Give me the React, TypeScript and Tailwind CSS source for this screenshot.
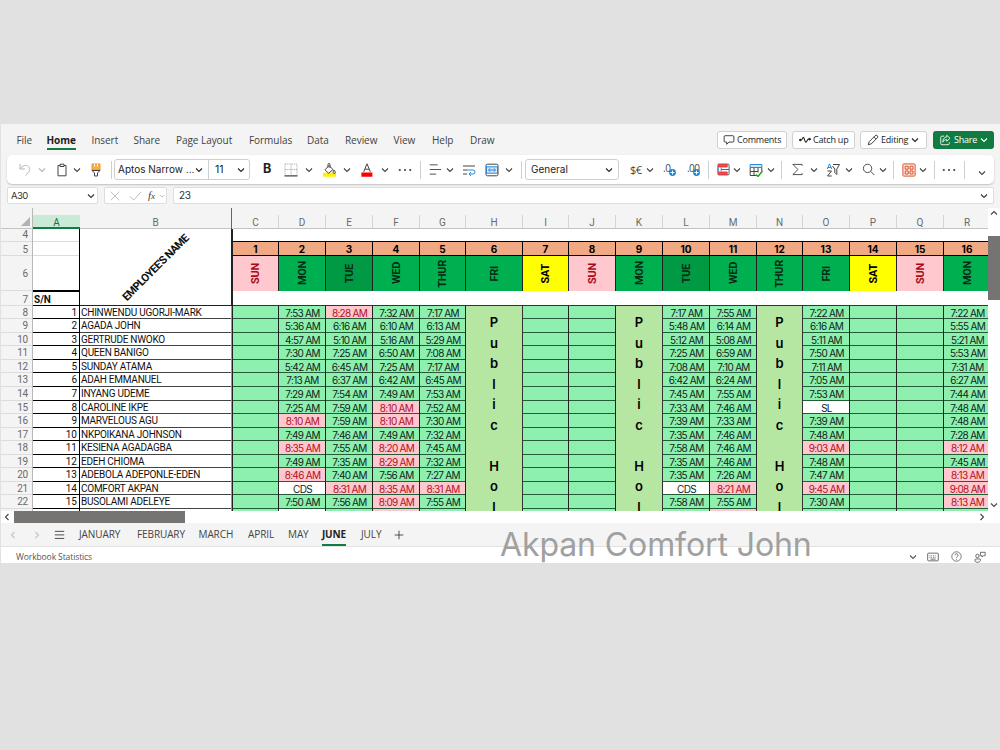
import type { ReactNode } from 'react';
import clsx from 'clsx';

const MENU = [
  { label: 'File', width: 'w-[30px]' },
  { label: 'Home', width: 'w-[45px]', active: true },
  { label: 'Insert', width: 'w-[42px]' },
  { label: 'Share', width: 'w-[42.5px]' },
  { label: 'Page Layout', width: 'w-[73px]' },
  { label: 'Formulas', width: 'w-[58px]' },
  { label: 'Data', width: 'w-[38px]' },
  { label: 'Review', width: 'w-[48.5px]' },
  { label: 'View', width: 'w-[38.5px]' },
  { label: 'Help', width: 'w-[38px]' },
  { label: 'Draw', width: 'w-[30px]' },
];

// Rows alternate between 13px and 14px, border included
const ROW_H = [
  'h-[13px]', 'h-[14px]', 'h-[13px]', 'h-[14px]', 'h-[13px]',
  'h-[14px]', 'h-[14px]', 'h-[13px]', 'h-[14px]', 'h-[13px]',
  'h-[14px]', 'h-[13px]', 'h-[14px]', 'h-[13px]', 'h-[14px]',
];

const EMPLOYEES = [
  'CHINWENDU UGORJI-MARK',
  'AGADA JOHN',
  'GERTRUDE NWOKO',
  'QUEEN BANIGO',
  'SUNDAY ATAMA',
  'ADAH EMMANUEL',
  'INYANG UDEME',
  'CAROLINE IKPE',
  'MARVELOUS AGU',
  'NKPOIKANA JOHNSON',
  'KESIENA AGADAGBA',
  'EDEH CHIOMA',
  'ADEBOLA ADEPONLE-EDEN',
  'COMFORT AKPAN',
  'BUSOLAMI ADELEYE',
];

interface DayColumn {
  letter: string;
  date: number;
  day: string;
  width: string;
  times?: string;
  holiday?: boolean;
  tail?: string;
}

const COLUMNS: DayColumn[] = [
  { letter: 'C', date: 1, day: 'SUN', width: 'w-[46px]' },
  {
    letter: 'D', date: 2, day: 'MON', width: 'w-[47px]', tail: 'bg-white',
    times: '7:53 5:36 4:57 7:30 5:42 7:13 7:29 7:25 8:10 7:49 8:35 7:49 8:46 CDS 7:50',
  },
  {
    letter: 'E', date: 3, day: 'TUE', width: 'w-[47px]',
    times: '8:28 6:16 5:10 7:25 6:45 6:37 7:54 7:59 7:59 7:46 7:55 7:35 7:40 8:31 7:56',
  },
  {
    letter: 'F', date: 4, day: 'WED', width: 'w-[47px]', tail: 'bg-[#ffc7ce]',
    times: '7:32 6:10 5:16 6:50 7:25 6:42 7:49 8:10 8:10 7:49 8:20 8:29 7:56 8:35 8:09',
  },
  {
    letter: 'G', date: 5, day: 'THUR', width: 'w-[46px]',
    times: '7:17 6:13 5:29 7:08 7:17 6:45 7:53 7:52 7:30 7:32 7:45 7:32 7:27 8:31 7:55',
  },
  { letter: 'H', date: 6, day: 'FRI', width: 'w-[57px]', holiday: true },
  { letter: 'I', date: 7, day: 'SAT', width: 'w-[46px]' },
  { letter: 'J', date: 8, day: 'SUN', width: 'w-[47px]' },
  { letter: 'K', date: 9, day: 'MON', width: 'w-[47px]', holiday: true },
  {
    letter: 'L', date: 10, day: 'TUE', width: 'w-[47px]',
    times: '7:17 5:48 5:12 7:25 7:08 6:42 7:45 7:33 7:39 7:35 7:58 7:35 7:35 CDS 7:58',
  },
  {
    letter: 'M', date: 11, day: 'WED', width: 'w-[47px]', tail: 'bg-[#ffc7ce]',
    times: '7:55 6:14 5:08 6:59 7:10 6:24 7:55 7:46 7:33 7:46 7:46 7:46 7:26 8:21 7:55',
  },
  { letter: 'N', date: 12, day: 'THUR', width: 'w-[46px]', holiday: true },
  {
    letter: 'O', date: 13, day: 'FRI', width: 'w-[47px]',
    times: '7:22 6:16 5:11 7:50 7:11 7:05 7:53 SL 7:39 7:48 9:03 7:48 7:47 9:45 7:30',
  },
  { letter: 'P', date: 14, day: 'SAT', width: 'w-[47px]' },
  { letter: 'Q', date: 15, day: 'SUN', width: 'w-[47px]' },
  {
    letter: 'R', date: 16, day: 'MON', width: 'w-[47px]',
    times: '7:22 5:55 5:21 5:53 7:31 6:27 7:44 7:48 7:48 7:28 8:12 7:45 8:13 9:08 8:13',
  },
];

const DAY_STYLE: Record<string, string> = {
  SUN: 'bg-[#ffc7ce] text-[#a80c18]',
  SAT: 'bg-[#ffff00] text-black',
  TUE: 'bg-[#009a45] text-[#062b13]',
  MON: 'bg-[#00b050] text-[#062b13]',
  WED: 'bg-[#00b050] text-[#062b13]',
  THUR: 'bg-[#00b050] text-[#062b13]',
  FRI: 'bg-[#00b050] text-[#062b13]',
};

const MONTHS = [
  { label: 'JANUARY', width: 'w-[58px]' },
  { label: 'FEBRUARY', width: 'w-[61.5px]' },
  { label: 'MARCH', width: 'w-[49.5px]' },
  { label: 'APRIL', width: 'w-[40px]' },
  { label: 'MAY', width: 'w-[34px]' },
  { label: 'JUNE', width: 'w-[39px]', active: true },
  { label: 'JULY', width: 'w-[34px]' },
];

function Chevron({ className, dir = 'down' }: { className?: string; dir?: 'down' | 'left' | 'right' | 'up' }) {
  const d = {
    down: 'M1 2.5 4 5.5 7 2.5',
    up: 'M1 5.5 4 2.5 7 5.5',
    left: 'M5.5 1 2.5 4 5.5 7',
    right: 'M2.5 1 5.5 4 2.5 7',
  }[dir];
  return (
    <svg viewBox="0 0 8 8" className={clsx('h-2 w-2 shrink-0', className)} fill="none" stroke="currentColor" strokeWidth="1.1">
      <path d={d} />
    </svg>
  );
}

function Icon({ className, size = 14, children }: { className?: string; size?: number; children: ReactNode }) {
  return (
    <svg
      width={size}
      height={size}
      viewBox="0 0 14 14"
      className={clsx('shrink-0', className)}
      fill="none"
      stroke="currentColor"
      strokeWidth="1"
    >
      {children}
    </svg>
  );
}

function Divider({ className }: { className?: string }) {
  return <div className={clsx('h-[18px] w-px shrink-0 bg-[#cfcfcf]', className)} />;
}

function Dots({ className }: { className?: string }) {
  return (
    <svg width="14" height="4" viewBox="0 0 14 4" className={clsx('shrink-0', className)} fill="#444">
      <circle cx="1.8" cy="2" r="1.1" />
      <circle cx="7" cy="2" r="1.1" />
      <circle cx="12.2" cy="2" r="1.1" />
    </svg>
  );
}

function MenuBar() {
  return (
    <div className="flex h-[31px] items-center pl-[15.5px] text-[10px] text-[#424242]">
      {MENU.map((m) => (
        <div key={m.label} className={clsx('flex h-full shrink-0 whitespace-nowrap pt-[9px]', m.width)}>
          <span
            className={clsx(
              'h-[17px] leading-[15px] tracking-[-0.05px]',
              m.active && 'border-b-2 border-[#107c41] font-bold tracking-[-0.4px] text-[#222]'
            )}
          >
            {m.label}
          </span>
        </div>
      ))}
      <div className="ml-auto mt-[1px] flex shrink-0 pr-[6px] text-[9px] tracking-[-0.2px] text-[#222]">
        <div className="flex h-[18px] w-[70px] items-center rounded-[3px] border border-[#d0d0d0] bg-white pl-[5px] whitespace-nowrap">
          <Icon size={12} className="mr-[2px]">
            <path d="M2.500 2h9a1.200 1.200 0 0 1 1.200 1.200v5a1.200 1.200 0 0 1-1.200 1.200H7L4.300 12V9.400H2.500a1.200 1.200 0 0 1-1.200-1.200v-5A1.200 1.200 0 0 1 2.500 2Z" />
          </Icon>
          Comments
        </div>
        <div className="ml-[5px] flex h-[18px] w-[63px] items-center rounded-[3px] border border-[#d0d0d0] bg-white pl-[6px] whitespace-nowrap">
          <Icon size={12} className="mr-[2px]">
            <path d="M1 7h1.500C4 7 4 4 5.200 4S6.500 9.500 8 9.500 9.500 6 11 6h1.500" strokeWidth="1.300" />
            <circle cx="1.500" cy="7" r="1" fill="currentColor" />
            <circle cx="12.500" cy="6" r="1" fill="currentColor" />
          </Icon>
          Catch up
        </div>
        <div className="ml-[5px] flex h-[18px] w-[67px] items-center rounded-[3px] border border-[#d0d0d0] bg-white pl-[6px] whitespace-nowrap">
          <Icon size={12} className="mr-[2px]">
            <path d="M1.500 12.500 2.500 9 9.500 2a1.500 1.500 0 0 1 2.500 2.500L5 11.500ZM8 3.500 10.500 6" />
          </Icon>
          Editing
          <Chevron className="ml-[3px]" />
        </div>
        <div className="ml-[6px] flex h-[18px] w-[61px] items-center rounded-[3px] bg-[#107c41] pl-[6px] whitespace-nowrap text-white">
          <Icon size={12} className="mr-[3px]">
            <path d="M6 2.500H3.500a1.500 1.500 0 0 0-1.500 1.500v7a1.500 1.500 0 0 0 1.500 1.500h7A1.500 1.500 0 0 0 12 11v-1.500M9 1.500 12.800 5 9 8.500V6.500C6.500 6.500 5.500 7.500 4.500 9.500 4.500 6 6 3.600 9 3.500Z" />
          </Icon>
          Share
          <Chevron className="ml-[3px]" />
        </div>
      </div>
    </div>
  );
}

function PlusDot({ className }: { className?: string }) {
  return (
    <svg width="7" height="7" viewBox="0 0 7 7" className={clsx('mt-[6px] shrink-0', className)}>
      <circle cx="3.500" cy="3.500" r="3.400" fill="#1a86d0" />
      <path d="M1.500 3.500h4M3.500 1.500v4" stroke="#fff" />
    </svg>
  );
}

function Toolbar() {
  return (
    <div className="ml-[6px] flex h-[29px] w-[987px] items-center overflow-hidden rounded-[5px] bg-white text-[#444] shadow-[0_1px_2px_rgba(0,0,0,0.22)]">
      <Icon size={14} className="ml-[11px] text-[#b5b5b5]">
        <path d="M2 1v5h5M2 6C4.500 2.500 8 1.500 10.500 3.500 13 6 11.500 8.500 7.500 12.500" />
      </Icon>
      <Chevron className="ml-[6px] text-[#b5b5b5]" />
      <Icon size={14} className="ml-[9px]">
        <path d="M5 2.500H3v10.300h8V2.500H9M5 1.200h4v2.300H5Z" />
      </Icon>
      <Chevron className="ml-[4px]" />
      <Icon size={14} className="ml-[8px]">
        <path d="M3 1h8v6H3Z" fill="#fbb040" stroke="#e8912d" />
        <path d="M5.500 1v2.500M8.500 1v2.500" stroke="#fff" />
        <path d="M3 7.500h8L8.500 10v3h-3v-3Z" fill="#fff" />
      </Icon>
      <Divider className="ml-[8px]" />

      <div className="ml-[2px] flex h-[21px] w-[136px] shrink-0 items-center rounded-[3px] border border-[#cfcfcf] text-[#222]">
        <span className="w-[80px] shrink-0 pl-[3px] font-['Inter',sans-serif] text-[10px] whitespace-nowrap">Aptos Narrow ...</span>
        <Chevron />
        <span className="ml-[5px] flex h-full w-[32px] items-center border-l border-[#cfcfcf] pl-[6px] font-['Inter',sans-serif] text-[10.5px]">11</span>
        <Chevron className="-ml-[3px]" />
      </div>

      <span className="ml-[13px] w-[9px] shrink-0 font-['Inter',sans-serif] text-[12.5px] leading-none font-bold text-[#222]">B</span>
      <Icon size={14} className="ml-[12px]">
        <path d="M1 1h12v11M1 1v11M7 1v11M1 6.500h12" stroke="#aaa" strokeDasharray="1 .8" />
        <path d="M.5 12.800h13" stroke="#444" strokeWidth="1.200" />
      </Icon>
      <Chevron className="ml-[7px]" />
      <Icon size={14} className="ml-[10px]">
        <path d="M0 9.800h13v4H0Z" fill="#fff000" stroke="none" />
        <path d="m6 2.500 4 4-4.500 3.800L2 6.800ZM5 4.500V1.500a1 1 0 0 1 2 0V5M11 7c2 2 1.500 3.500.3 3.500S9.500 9 11 7Z" />
      </Icon>
      <Chevron className="ml-[6px]" />
      <Icon size={14} className="ml-[9px]">
        <path d="M1.400 9.500h11v4.200h-11Z" fill="#f00" stroke="none" />
        <path d="M3.700 8.800 7 .8l3.300 8M5 6.200h4" />
      </Icon>
      <Chevron className="ml-[7px]" />
      <Dots className="ml-[9px]" />
      <Divider className="ml-[8px]" />
      <Icon size={13} className="ml-[8px]">
        <path d="M.8 2h8.500M.8 7H13M.8 12h7" />
      </Icon>
      <Chevron className="ml-[4px]" />
      <Icon size={14} className="ml-[8px]">
        <path d="M1 3h12M1 7h4M1 11h4" />
        <path d="M5 7h6a2 2 0 0 1 0 4H7M9 9 7 11l2 2" stroke="#2b88d8" />
      </Icon>
      <Icon size={14} className="ml-[9px]">
        <rect x="1" y="1.200" width="12" height="11.600" rx="1.500" />
        <rect x="1.500" y="3.800" width="11" height="6.400" fill="#d5e9f8" stroke="#2b88d8" />
        <path d="M3.500 7h7M5.300 5.300 3.500 7l1.800 1.700M8.700 5.300 10.500 7 8.700 8.700" stroke="#2b88d8" />
      </Icon>
      <Chevron className="ml-[6px]" />
      <Divider className="ml-[8px]" />
      <div className="ml-[3px] flex h-[21px] w-[94px] shrink-0 items-center justify-between rounded-[3px] border border-[#cfcfcf] pr-[5px] pl-[5px] font-['Inter',sans-serif] text-[10px] text-[#222]">
        General
        <Chevron />
      </div>
      <span className="ml-[11px] w-[12px] shrink-0 text-[11px] leading-none tracking-[-0.5px]">$€</span>
      <Chevron className="ml-[4px]" />
      <span className="ml-[9px] flex w-[15px] shrink-0 items-center text-[10px] leading-none">
        <span className="-mt-[4px] tracking-[-0.3px]">.0</span>
        <PlusDot className="-ml-[2px]" />
      </span>
      <span className="ml-[9px] flex w-[15px] shrink-0 items-center text-[10px] leading-none">
        <span className="-mt-[4px] tracking-[-0.6px]">.00</span>
        <PlusDot className="-ml-[6px]" />
      </span>
      <Divider className="ml-[6px]" />
      <Icon size={13} className="ml-[8px]">
        <rect x="1" y="1.200" width="12" height="11.600" rx="1" fill="#fff" stroke="#555" />
        <path d="M1.500 1.500h9.500v2.800h-9.500ZM1.500 9.700h9.500v2.800h-9.500Z" fill="#f9484a" stroke="#e03a3c" />
        <path d="M1.200 5v4M4.500 5v4" stroke="#2b88d8" />
        <path d="M4.500 7H13" stroke="#555" />
      </Icon>
      <Chevron className="ml-[3px]" />
      <Icon size={14} className="ml-[8px]">
        <path d="M1.200 4.500h11.600V8M1.200 4.500v8H7M1.200 8.500h8M5 4.500v8M9 4.500v5" />
        <path d="M1.200 1.500h11.600v3H1.200Z" fill="#cfe6f8" stroke="#2b88d8" />
        <path d="m7 11.500 2 2 4.500-5.500" stroke="#13a10e" strokeWidth="1.400" />
      </Icon>
      <Chevron className="ml-[4px]" />
      <Divider className="ml-[6px]" />
      <Icon size={13} className="ml-[9px]">
        <path d="M12 3V1.500H2L7.500 7 2 12.500h10V11" />
      </Icon>
      <Chevron className="ml-[6px]" />
      <svg width="15" height="14" viewBox="0 0 15 14" className="ml-[8px] shrink-0" fill="none" stroke="#444">
        <path d="M1.200 6 3.500.8 5.800 6M2 4.500h3" stroke="#2b88d8" />
        <path d="M1.500 8h4l-4 5h4.200M7 1.500h6.500L10.800 6v5.500L8.800 9.500V6L6.500 3" />
      </svg>
      <Chevron className="ml-[4px]" />
      <Icon size={13} className="ml-[9px]">
        <circle cx="6" cy="5.800" r="4.500" />
        <path d="m9.300 9 4 4" />
      </Icon>
      <Chevron className="ml-[4px]" />
      <Divider className="ml-[6px]" />
      <Icon size={14} className="ml-[8px] text-[#d9552e]">
        <rect x=".9" y=".9" width="12.200" height="12.200" rx=".8" fill="#fde7df" />
        <path d="M3.200 3.200h3v3h-3ZM8 3.200h3v3H8ZM3.200 8h3v3h-3ZM8 8h3v3H8Z" />
      </Icon>
      <Chevron className="ml-[3px]" />
      <Divider className="ml-[7px]" />
      <Dots className="ml-[7px]" />
      <Divider className="ml-[8px]" />
      <Chevron className="mt-[7px] ml-[13px]" />
    </div>
  );
}

function FormulaBar() {
  return (
    <div className="mt-[3px] ml-[6px] flex h-[17px] items-center font-['Inter',sans-serif] text-[#333]">
      <div className="flex h-full w-[91px] items-center justify-between rounded-[2px] border border-[#dedede] bg-white pt-px pr-[2px] pl-[3px] text-[9.5px] tracking-[-0.6px]">
        A30
        <Chevron />
      </div>
      <div className="ml-[6px] flex h-full w-[63px] items-center rounded-[2px] border border-[#dedede] bg-white pl-[4px] text-[#b5b5b5]">
        <Icon size={12}>
          <path d="m2 2 10 10M12 2 2 12" />
        </Icon>
        <Icon size={13} className="ml-[8px]">
          <path d="m1 8 4 4 8-9" />
        </Icon>
        <span className="ml-[6px] w-[10px] font-['Liberation_Serif',serif] text-[11px] leading-none text-[#444] italic">
          f<span className="text-[9px]">x</span>
        </span>
        <Chevron className="ml-[2px] scale-75" />
      </div>
      <div className="ml-[6px] flex h-full w-[821px] items-center justify-between rounded-[2px] border border-[#dedede] bg-white pr-[5px] pl-[5px] text-[10px] tracking-[-0.4px]">
        23
        <Chevron />
      </div>
    </div>
  );
}

function RowHeaders() {
  return (
    <div className="w-[32px] shrink-0 border-r border-[#b8b8b8] bg-[#f4f4f4] text-right text-[10px] tracking-[-0.2px] text-[#6a6a6a]">
      <div className="flex h-[21px] items-end justify-end border-b border-[#c4c4c4] pr-[2px] pb-[2px]">
        <svg width="9" height="9" viewBox="0 0 9 9">
          <path d="M9 0v9H0Z" fill="#b3b3b3" />
        </svg>
      </div>
      <div className="h-[13px] border-b border-[#dcdcdc] pr-[4px] leading-[12px]">4</div>
      <div className="h-[14px] border-b border-[#dcdcdc] pr-[4px] leading-[15px]">5</div>
      <div className="h-[35px] border-b border-[#dcdcdc] pr-[4px] leading-[35px]">6</div>
      <div className="h-[15px] border-b border-[#dcdcdc] pr-[4px] leading-[17px]">7</div>
      {ROW_H.map((h, i) => (
        <div key={i} className={clsx('border-b border-[#dcdcdc] pr-[4px] leading-[14px]', h)}>
          {i + 8}
        </div>
      ))}
    </div>
  );
}

function NameColumns() {
  return (
    <div className="flex shrink-0 bg-white text-[10px] text-[#111]">
      <div className="flex w-[47px] flex-col">
        <div className="h-[7px] bg-[#f4f4f4]" />
        <div className="h-[14px] border-b-2 border-[#107c41] bg-[#caead8] text-center leading-[15px] text-[#1c6b41]">A</div>
        <div className="flex-1 border-r-[1.5px] border-black">
          <div className="h-[13px] border-b border-[#dcdcdc]" />
          <div className="h-[14px] border-b border-[#dcdcdc]" />
          <div className="h-[36px] border-b-2 border-black" />
          <div className="h-[14px] border-b border-black pl-px leading-[15px] font-bold">S/N</div>
          {ROW_H.map((h, i) => (
            <div key={i} className={clsx('border-b border-black pr-[2px] text-right leading-[14px]', h)}>
              {i + 1}
            </div>
          ))}
        </div>
      </div>
      <div className="w-[151px]">
        <div className="h-[21px] border-b border-[#c4c4c4] bg-[#f4f4f4] pt-[7px] text-center leading-[15px] text-[#6a6a6a]">B</div>
        <div className="flex h-[77px] items-center justify-center border-b border-[#222] pt-[2px] pl-[2px]">
          <span className="-rotate-45 text-[11px] font-bold tracking-[-0.6px] whitespace-nowrap">EMPLOYEE'S NAME</span>
        </div>
        {EMPLOYEES.map((name, i) => (
          <div
            key={name}
            className={clsx('border-b border-[#444] pl-px leading-[14px] tracking-[-0.25px] whitespace-nowrap', ROW_H[i])}
          >
            {name}
          </div>
        ))}
      </div>
    </div>
  );
}

function TimeCell({ value, height }: { value: string; height: string }) {
  const isTime = value.includes(':');
  const late = isTime && Number(value.split(':')[0]) >= 8;
  return (
    <div
      className={clsx(
        'border-b border-[#245b38] pl-px text-center leading-[14px] whitespace-nowrap',
        height,
        late && 'bg-[#ffc7ce] text-[#b0101d]',
        value && !isTime && 'bg-white'
      )}
    >
      {isTime ? `${value} AM` : value}
    </div>
  );
}

function DayCol({ col }: { col: DayColumn }) {
  const times = col.times ? col.times.split(' ') : ROW_H.map(() => '');
  return (
    <div className={clsx('flex shrink-0 flex-col', col.width)}>
      <div className="flex h-[21px] flex-col justify-end border-b border-[#c4c4c4] bg-[#f4f4f4]">
        <div className="h-[13px] border-r border-[#d4d4d4] text-center text-[10px] leading-[15px] text-[#6a6a6a]">{col.letter}</div>
      </div>
      <div className="h-[12px] bg-white" />
      <div className="h-[15px] border-y-[1.5px] border-r border-black bg-[#f1a983] text-center font-['Inter',sans-serif] text-[10px] leading-[14px] font-bold">
        {col.date}
      </div>
      <div className={clsx('flex h-[35px] items-center justify-center border-r border-[#222]', DAY_STYLE[col.day])}>
        <span className="rotate-180 text-[11px] leading-none font-bold tracking-[-0.3px] [writing-mode:vertical-rl]">{col.day}</span>
      </div>
      <div className="h-[15px] border-b border-[#333] bg-white" />
      {col.holiday ? (
        <div className="h-[205px] overflow-hidden border-r border-[#333] bg-[#b5e6a2] pt-[6px] text-center font-['Inter',sans-serif] text-[13px] leading-[20.5px] font-semibold whitespace-pre">
          {'Public Hol'.split('').map((ch, i) => (
            <div key={i} className="h-[20.5px]">{ch}</div>
          ))}
        </div>
      ) : (
        <div className="border-r border-[#222] bg-[#8df0ae] font-['Inter',sans-serif] text-[10px] tracking-[-0.7px] text-[#10241a]">
          {times.map((t, i) => (
            <TimeCell key={i} value={t} height={ROW_H[i]} />
          ))}
          <div className={clsx('h-[2px]', col.tail)} />
        </div>
      )}
    </div>
  );
}

function Sheet() {
  return (
    <div className="flex h-[303px]">
      <div className="flex h-[303px] w-[987px] overflow-hidden bg-[#f4f4f4] font-['Roboto',sans-serif]">
        <RowHeaders />
        <NameColumns />
        {/* Frozen pane edge */}
        <div className="flex w-[2px] shrink-0 flex-col">
          <div className="h-[21px] w-px bg-[#666]" />
          <div className="h-[77px] bg-[#222]" />
          <div className="flex-1 border-r border-[#222] bg-[#999]" />
        </div>
        {COLUMNS.map((col) => (
          <DayCol key={col.letter} col={col} />
        ))}
      </div>
      <div className="flex w-[12px] flex-col items-center bg-white text-[#444]">
        <Chevron dir="up" className="mt-[1px]" />
        <div className="mt-[19px] h-[64px] w-full bg-[#757473]" />
        <Chevron className="mt-auto mb-[2px]" />
      </div>
    </div>
  );
}

function SheetTabs() {
  return (
    <div className="flex h-[24px] shrink-0 items-center border-b border-[#e2e2e2] bg-[#f4f4f4] text-[10px] tracking-[-0.1px] text-[#444]">
      <Chevron dir="left" className="ml-[8px] text-[#c4c4c4]" />
      <Chevron dir="right" className="ml-[16px] text-[#c4c4c4]" />
      <Icon size={11} className="mr-[14px] ml-[13px]">
        <path d="M1 3h12M1 7.500h12M1 12h12" strokeWidth="1.200" />
      </Icon>
      {MONTHS.map((m) => (
        <div key={m.label} className={clsx('flex h-full shrink-0', m.width)}>
          <span
            className={clsx(
              'h-[23px] leading-[23px]',
              m.active && 'border-b-2 border-[#107c41] font-bold tracking-[-0.2px] text-[#222]'
            )}
          >
            {m.label}
          </span>
        </div>
      ))}
      <Icon size={10} className="-ml-px">
        <path d="M7 1v12M1 7h12" strokeWidth="1.300" />
      </Icon>
    </div>
  );
}

function StatusBar() {
  return (
    <div className="flex h-[16px] items-center bg-white pt-[3px] pr-[14px] pl-[15px] text-[8.5px] leading-[12px] tracking-[-0.1px] text-[#555]">
      Workbook Statistics
      <Chevron className="ml-auto" />
      <Icon size={12} className="ml-[10px]">
        <rect x=".8" y="2.500" width="12.400" height="9" rx="1" />
        <path d="M3 5.500h8M3 7.500h8" strokeDasharray="1 1" />
        <path d="M4 9.500h6" />
      </Icon>
      <Icon size={11} className="ml-[12px]">
        <circle cx="7" cy="7" r="6" />
        <path d="M5 5.500a2 2 0 1 1 2.800 1.800C7 7.700 7 8 7 8.800M7 10v1" />
      </Icon>
      <Icon size={12} className="ml-[12px]">
        <circle cx="4" cy="5.800" r="2" />
        <path d="M1 10.300a1.500 1.500 0 0 1 1.500-1H7c1 0 1 2-.5 3.200-1.500 1-4 .8-5-.3Z" />
        <path d="M7.500 1.500h5.500v4h-2L9.500 7V5.500h-2Z" />
      </Icon>
    </div>
  );
}

export default function App() {
  return (
    <div className="relative h-[750px] w-[1000px] overflow-hidden bg-[#e1e1e1] pt-[124px] pl-px font-['Open_Sans','Noto_Sans',sans-serif]">
      <div className="h-[439px] w-[999px] bg-[#f4f4f4]">
        <MenuBar />
        <Toolbar />
        <FormulaBar />
        <div className="h-[4px]" />
        <Sheet />
        <div className="flex h-[12px] items-center bg-white text-[#444]">
          <Chevron dir="left" className="ml-[2px]" />
          <div className="ml-[3px] h-full w-[171px] bg-[#757473]" />
          <Chevron dir="right" className="mr-[14px] ml-auto" />
        </div>
        <SheetTabs />
        <StatusBar />
      </div>
      {/* Signature drawn over the tabs and status bar */}
      <div className="absolute top-[525px] left-[500px] font-['Inter',sans-serif] text-[32px] leading-[40px] font-normal tracking-[-0.1px] whitespace-nowrap text-[#a0a0a0]">
        Akpan Comfort John
      </div>
    </div>
  );
}
